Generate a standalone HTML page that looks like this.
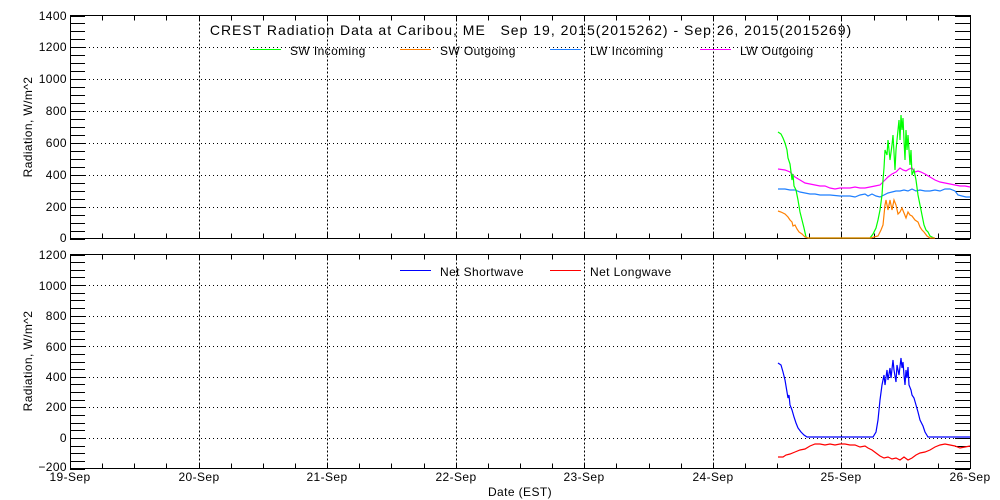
<!DOCTYPE html>
<html><head><meta charset="utf-8"><style>
html,body{margin:0;padding:0;background:#fff;width:1000px;height:500px;overflow:hidden}
svg{display:block}
text{font-family:"Liberation Sans",sans-serif;font-size:12px;fill:#000;letter-spacing:0.4px}
</style></head><body>
<svg id="s" width="1000" height="500" xmlns="http://www.w3.org/2000/svg">
<g id="g"></g>
<rect x="70.5" y="15.5" width="900" height="223" fill="none" stroke="#000"/>
<rect x="70.5" y="254.5" width="900" height="214" fill="none" stroke="#000"/>
<text x="531" y="35" text-anchor="middle" xml:space="preserve" style="font-size:14px;letter-spacing:1px">CREST Radiation Data at Caribou, ME   Sep 19, 2015(2015262) - Sep 26, 2015(2015269)</text>
<line x1="250" y1="49.5" x2="281" y2="49.5" stroke="#00ff00"/><text x="290" y="55">SW Incoming</text>
<line x1="400" y1="49.5" x2="431" y2="49.5" stroke="#ff8000"/><text x="440" y="55">SW Outgoing</text>
<line x1="550" y1="49.5" x2="581" y2="49.5" stroke="#1e7fff"/><text x="590" y="55">LW Incoming</text>
<line x1="700" y1="49.5" x2="731" y2="49.5" stroke="#ff00ff"/><text x="740" y="55">LW Outgoing</text>
<line x1="400" y1="270.5" x2="431" y2="270.5" stroke="#0000ff"/><text x="440" y="276">Net Shortwave</text>
<line x1="550" y1="270.5" x2="581" y2="270.5" stroke="#ff0000"/><text x="590" y="276">Net Longwave</text>
<g text-anchor="end">
<text x="67" y="20">1400</text><text x="67" y="51">1200</text><text x="67" y="83">1000</text><text x="67" y="115">800</text><text x="67" y="147">600</text><text x="67" y="179">400</text><text x="67" y="211">200</text><text x="67" y="242">0</text>
<text x="67" y="259">1200</text><text x="67" y="290">1000</text><text x="67" y="320">800</text><text x="67" y="351">600</text><text x="67" y="381">400</text><text x="67" y="411">200</text><text x="67" y="442">0</text><text x="67" y="471">−200</text>
</g>
<g text-anchor="middle">
<text x="70" y="481">19-Sep</text><text x="199" y="481">20-Sep</text><text x="327" y="481">21-Sep</text><text x="456" y="481">22-Sep</text><text x="584" y="481">23-Sep</text><text x="713" y="481">24-Sep</text><text x="841" y="481">25-Sep</text><text x="970" y="481">26-Sep</text>
<text x="520" y="496">Date (EST)</text>
<text transform="translate(32,127) rotate(-90)">Radiation, W/m^2</text>
<text transform="translate(32,361) rotate(-90)">Radiation, W/m^2</text>
</g>
<g fill="none" stroke-width="1.2">
<polyline stroke="#ff00ff" points="778,169 785,170 790,172 795,177 800,180 805,183 810,184 815,185 820,186 825,186 830,188 835,189 840,188 845,188 850,188 855,187 860,188 865,188 870,187 875,186 880,185 884,181 888,177 892,174 896,172 900,168 903,170 906,171 909,169 912,168 915,172 918,171 921,172 925,174 930,177 935,180 940,182 945,183 950,184 955,185 960,186 965,186 970,187"/>
<polyline stroke="#1e7fff" points="778,189 785,189 790,190 795,190 800,192 805,193 810,194 815,194 820,195 830,195 840,196 850,196 855,197 860,195 865,194 868,196 872,194 876,196 880,197 884,195 888,193 892,192 896,191 900,191 904,190 908,191 912,189 916,191 920,190 925,191 930,191 935,190 940,191 945,189 950,189 955,191 958,195 962,196 966,197 970,197"/>
<polyline stroke="#00ff00" points="778,132 781,134 783,138 785,143 787,150 788,158 790,164 791,172 792,180 793,174 794,186 796,190 798,200 800,212 802,220 804,228 806,237 808,238 870,238 873,234 876,228 878,220 880,210 882,195 883,180 884,168 885,150 887,155 888,140 890,160 892,145 893,135 895,170 896,150 898,130 899,120 900,140 901,115 902,130 903,118 904,140 905,160 906,130 907,150 908,135 910,165 911,150 912,175 914,170 916,180 918,195 920,205 922,215 924,225 926,230 928,232 930,236 934,238"/>
<polyline stroke="#ff8000" points="778,211 781,212 785,214 788,217 790,220 792,222 793,226 795,225 797,229 799,232 802,234 805,237 808,238 871,238 874,237 878,236 881,230 883,225 884,215 885,205 886,200 888,210 889,205 890,200 892,210 893,205 894,200 896,205 898,214 900,212 902,208 904,213 906,218 908,212 910,215 912,216 915,220 918,222 920,227 922,230 924,232 927,236 930,238 935,238"/>
<polyline stroke="#0000ff" points="778,363 781,365 783,372 785,380 787,392 788,398 789,395 790,405 792,410 794,417 796,423 798,428 801,432 804,435 807,437 873,437 876,432 878,420 880,400 882,385 884,375 885,385 887,370 888,380 890,368 891,378 893,360 894,370 896,382 897,365 899,375 901,358 902,368 903,362 904,375 905,385 906,370 907,378 908,367 909,385 911,390 912,395 914,398 916,405 918,412 920,420 923,426 925,432 928,437 970,437"/>
<polyline stroke="#ff0000" points="778,457 783,457 786,455 790,454 795,452 800,450 805,449 810,446 815,444 820,444 825,445 830,444 835,445 840,444 845,444 850,445 855,445 860,447 865,446 868,448 872,450 876,453 880,456 884,458 888,457 892,459 896,458 900,460 904,457 908,460 912,458 916,455 920,453 925,452 930,450 935,447 940,445 945,444 950,445 955,446 960,448 965,447 970,446"/>
</g>
</svg>
<script>
var g=document.getElementById('g'),h='';
function L(x1,y1,x2,y2,extra){h+='<line x1="'+x1+'" y1="'+y1+'" x2="'+x2+'" y2="'+y2+'" stroke="#000" '+(extra||'')+'/>';}
var panels=[[15.5,238.5,0,1400],[254.5,468.5,-200,1200]];
panels.forEach(function(p){
 var top=p[0],bot=p[1],sc=(bot-top)/(p[3]-p[2]);
 for(var v=p[2]+200;v<p[3];v+=200){var y=Math.round(bot-(v-p[2])*sc)+0.5;L(85,y,955,y,'stroke-dasharray="1,3"');}
 for(var v=p[2];v<=p[3];v+=50){var y=Math.round(bot-(v-p[2])*sc)+0.5;L(70,y,85,y);L(955,y,970,y);}
 for(var d=1;d<7;d++){var x=Math.round(70+d*900/7)+0.5;L(x,top,x,bot,'stroke-dasharray="2,2"');}
 for(var q=1;q<28;q++){var x=Math.round(70+q*900/28)+0.5;L(x,top,x,top+5);L(x,bot-5,x,bot);}
});
g.innerHTML=h;
</script>
</body></html>
